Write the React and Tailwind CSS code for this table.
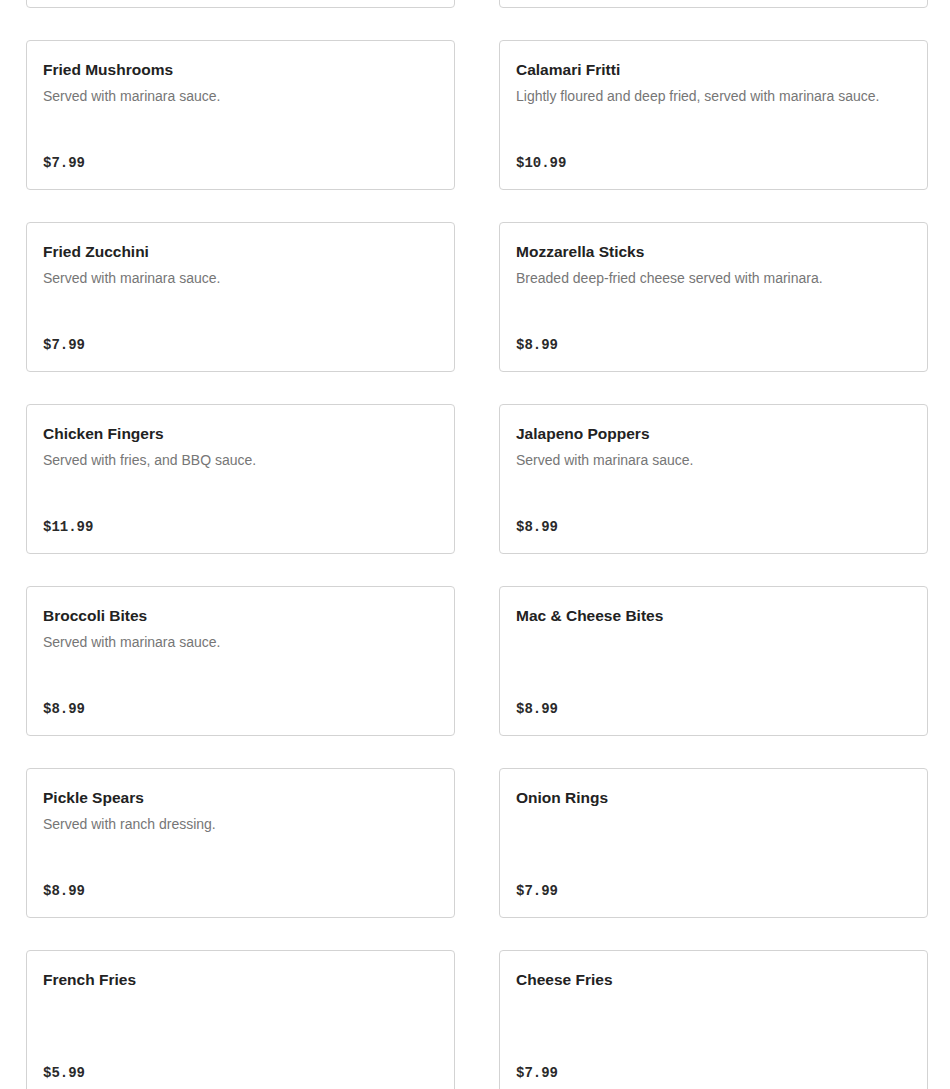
import React from 'react';

const items = [
  { name: 'Hidden Left', description: '', price: '' },
  { name: 'Hidden Right', description: '', price: '' },
  { name: 'Fried Mushrooms', description: 'Served with marinara sauce.', price: '$7.99' },
  { name: 'Calamari Fritti', description: 'Lightly floured and deep fried, served with marinara sauce.', price: '$10.99' },
  { name: 'Fried Zucchini', description: 'Served with marinara sauce.', price: '$7.99' },
  { name: 'Mozzarella Sticks', description: 'Breaded deep-fried cheese served with marinara.', price: '$8.99' },
  { name: 'Chicken Fingers', description: 'Served with fries, and BBQ sauce.', price: '$11.99' },
  { name: 'Jalapeno Poppers', description: 'Served with marinara sauce.', price: '$8.99' },
  { name: 'Broccoli Bites', description: 'Served with marinara sauce.', price: '$8.99' },
  { name: 'Mac & Cheese Bites', description: '', price: '$8.99' },
  { name: 'Pickle Spears', description: 'Served with ranch dressing.', price: '$8.99' },
  { name: 'Onion Rings', description: '', price: '$7.99' },
  { name: 'French Fries', description: '', price: '$5.99' },
  { name: 'Cheese Fries', description: '', price: '$7.99' },
];

const MenuCard = ({ item }) => (
  <div className="h-[150px] rounded-[4px] border border-[#d3d3d3] bg-white px-4 pt-[18px] pb-[17px] flex flex-col justify-between">
    <div>
      <h3 className="text-[15.5px] leading-[22px] font-semibold text-[#222]">{item.name}</h3>
      {item.description && (
        <p className="mt-[6px] text-[14px] leading-[18px] text-[#767676]">{item.description}</p>
      )}
    </div>
    <div className="text-[14px] leading-[18px] font-bold text-[#2a2a2a] font-['Liberation_Mono',monospace]">
      {item.price}
    </div>
  </div>
);

const App = () => {
  return (
    <div className="h-[1089px] overflow-hidden bg-white font-['Liberation_Sans',Arial,sans-serif]">
      <div className="-mt-[142px] pl-[26px] pr-[22px] grid grid-cols-2 gap-x-[44px] gap-y-[32px]">
        {items.map((item, i) =>
          i < 2 ? (
            <div key={item.name} className="h-[150px] rounded-[4px] border border-[#d3d3d3] bg-white" />
          ) : (
            <MenuCard key={item.name} item={item} />
          )
        )}
      </div>
    </div>
  );
};

export default App;
